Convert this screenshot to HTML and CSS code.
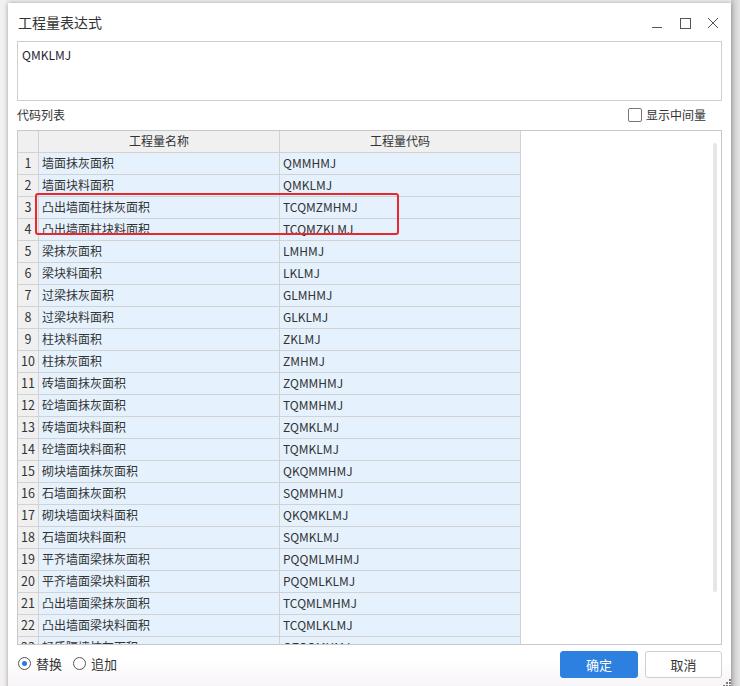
FILE: index.html
```html
<!DOCTYPE html>
<html lang="zh-CN">
<head>
<meta charset="utf-8">
<title>工程量表达式</title>
<link rel="stylesheet" href="styles.css">
</head>
<body>
<div class="desk">
  <div class="dialog">
    <div class="titlebar">
      <span class="title">工程量表达式</span>
      <div class="winctl">
        <svg width="12" height="12" viewBox="0 0 12 12"><path d="M1 10.5H11" stroke="#555" stroke-width="1"/></svg>
        <svg width="12" height="12" viewBox="0 0 12 12"><rect x="1.5" y="1.5" width="10" height="10" fill="none" stroke="#555" stroke-width="1"/></svg>
        <svg width="12" height="12" viewBox="0 0 12 12"><path d="M1 1L11 11M11 1L1 11" stroke="#555" stroke-width="1"/></svg>
      </div>
    </div>
    <div class="expr">QMKLMJ</div>
    <div class="listbar">
      <span>代码列表</span>
      <label class="chk"><span class="box"></span>显示中间量</label>
    </div>
    <div class="frame">
      <div class="grid">
        <div class="hd"></div><div class="hd">工程量名称</div><div class="hd">工程量代码</div>
        <div class="ix">1</div><div class="c">墙面抹灰面积</div><div class="c">QMMHMJ</div>
        <div class="ix">2</div><div class="c">墙面块料面积</div><div class="c">QMKLMJ</div>
        <div class="ix">3</div><div class="c">凸出墙面柱抹灰面积</div><div class="c">TCQMZMHMJ</div>
        <div class="ix">4</div><div class="c">凸出墙面柱块料面积</div><div class="c">TCQMZKLMJ</div>
        <div class="ix">5</div><div class="c">梁抹灰面积</div><div class="c">LMHMJ</div>
        <div class="ix">6</div><div class="c">梁块料面积</div><div class="c">LKLMJ</div>
        <div class="ix">7</div><div class="c">过梁抹灰面积</div><div class="c">GLMHMJ</div>
        <div class="ix">8</div><div class="c">过梁块料面积</div><div class="c">GLKLMJ</div>
        <div class="ix">9</div><div class="c">柱块料面积</div><div class="c">ZKLMJ</div>
        <div class="ix">10</div><div class="c">柱抹灰面积</div><div class="c">ZMHMJ</div>
        <div class="ix">11</div><div class="c">砖墙面抹灰面积</div><div class="c">ZQMMHMJ</div>
        <div class="ix">12</div><div class="c">砼墙面抹灰面积</div><div class="c">TQMMHMJ</div>
        <div class="ix">13</div><div class="c">砖墙面块料面积</div><div class="c">ZQMKLMJ</div>
        <div class="ix">14</div><div class="c">砼墙面块料面积</div><div class="c">TQMKLMJ</div>
        <div class="ix">15</div><div class="c">砌块墙面抹灰面积</div><div class="c">QKQMMHMJ</div>
        <div class="ix">16</div><div class="c">石墙面抹灰面积</div><div class="c">SQMMHMJ</div>
        <div class="ix">17</div><div class="c">砌块墙面块料面积</div><div class="c">QKQMKLMJ</div>
        <div class="ix">18</div><div class="c">石墙面块料面积</div><div class="c">SQMKLMJ</div>
        <div class="ix">19</div><div class="c">平齐墙面梁抹灰面积</div><div class="c">PQQMLMHMJ</div>
        <div class="ix">20</div><div class="c">平齐墙面梁块料面积</div><div class="c">PQQMLKLMJ</div>
        <div class="ix">21</div><div class="c">凸出墙面梁抹灰面积</div><div class="c">TCQMLMHMJ</div>
        <div class="ix">22</div><div class="c">凸出墙面梁块料面积</div><div class="c">TCQMLKLMJ</div>
        <div class="ix">23</div><div class="c">轻质隔墙抹灰面积</div><div class="c">QZGQMHMJ</div>
      </div>
      <div class="scroll"></div>
      <div class="mark"></div>
    </div>
    <div class="footer">
      <div class="radios">
        <label class="rad"><span class="dot on"></span>替换</label>
        <label class="rad"><span class="dot"></span>追加</label>
      </div>
      <div class="btns">
        <button class="btn primary">确定</button>
        <button class="btn">取消</button>
      </div>
    </div>
    <svg class="grip" width="8" height="8" viewBox="0 0 8 8"><g fill="#7a7a7a"><rect x="6" y="0" width="2" height="2"/><rect x="3" y="3" width="2" height="2"/><rect x="6" y="3" width="2" height="2"/><rect x="0" y="6" width="2" height="2"/><rect x="3" y="6" width="2" height="2"/><rect x="6" y="6" width="2" height="2"/></g></svg>
  </div>
</div>
</body>
</html>
```

FILE: styles.css
```css
* { box-sizing: border-box; }
html, body { margin: 0; padding: 0; }
body {
  width: 740px;
  height: 686px;
  overflow: hidden;
  background: #eeeeee;
  font-family: "Noto Sans CJK SC", "Noto Sans", sans-serif;
  font-size: 12px;
  color: #333;
}
.desk {
  width: 740px;
  height: 686px;
  padding: 3px 0 0 8px;
  background: linear-gradient(to right, #f2f2f2 0, #f2f2f2 731px, #c9c9c9 731px, #e4e4e4 740px);
}
.dialog {
  position: relative;
  width: 723px;
  height: 700px;
  background: #fff;
  padding: 0 9px;
  box-shadow: 0 0 5px rgba(0,0,0,0.35);
}
.titlebar {
  height: 38px;
  display: flex;
  align-items: center;
  justify-content: space-between;
  padding-left: 1px;
}
.title { font-size: 14px; color: #333; }
.winctl {
  display: flex;
  gap: 16px;
  margin-right: 3px;
  margin-top: 1px;
}
.expr {
  height: 60px;
  border: 1px solid #cfcfcf;
  padding: 3px 4px;
  color: #1f1f33;
  line-height: 20px;
}
.listbar {
  height: 29px;
  display: flex;
  align-items: center;
  justify-content: space-between;
  padding-bottom: 2px;
}
.chk {
  display: flex;
  align-items: center;
  gap: 4px;
  margin-right: 16px;
  color: #333;
}
.box {
  width: 14px;
  height: 14px;
  border: 1px solid #777;
  border-radius: 2px;
  background: #fff;
}
.frame {
  position: relative;
  height: 515px;
  border: 1px solid #c8c8c8;
  overflow: hidden;
}
.grid {
  display: grid;
  grid-template-columns: 21px 241px 241px;
  grid-auto-rows: 22px;
  width: 503px;
}
.grid > div {
  border-right: 1px solid #d2d2d2;
  border-bottom: 1px solid #d2d2d2;
  line-height: 19px;
  white-space: nowrap;
  overflow: hidden;
}
.hd { background: #f0f0f0; text-align: center; color: #333; }
.ix { background: #f0f0f0; text-align: center; font-size: 12.5px; color: #333; }
.c { background: #e5f2fd; padding-left: 3px; color: #333; }
.scroll {
  position: absolute;
  left: 695px;
  top: 12px;
  width: 4px;
  height: 449px;
  border-radius: 2px;
  background: #e6e6e6;
}
.mark {
  position: absolute;
  left: 17px;
  top: 62px;
  width: 364px;
  height: 42px;
  border: 2px solid #e8282c;
  border-radius: 3px;
}
.footer {
  height: 55px;
  margin: 0 -9px;
  padding: 6px 9px 0 10px;
  display: flex;
  justify-content: space-between;
  align-items: flex-start;
  background: linear-gradient(to bottom, #ffffff 0, #ffffff 15px, #f4eef3 55px);
}
.radios {
  display: flex;
  gap: 11px;
  height: 25px;
  align-items: center;
}
.rad {
  display: flex;
  align-items: center;
  gap: 5px;
  font-size: 13px;
  color: #333;
}
.dot {
  position: relative;
  width: 13px;
  height: 13px;
  border: 1px solid #555;
  border-radius: 50%;
  background: #fff;
}
.dot.on::after {
  content: "";
  position: absolute;
  left: 3px;
  top: 3px;
  width: 5px;
  height: 5px;
  border-radius: 50%;
  background: #2a7be0;
}
.btns { display: flex; gap: 7px; }
.btn {
  height: 27px;
  width: 77px;
  border: 1px solid #cfcfcf;
  border-radius: 3px;
  background: #fff;
  font-family: inherit;
  font-size: 13px;
  color: #333;
  padding: 0;
}
.btn.primary {
  width: 78px;
  background: #2e80e0;
  border-color: #2e80e0;
  color: #fff;
}
.grip {
  position: absolute;
  left: 715px;
  top: 676px;
}
```
